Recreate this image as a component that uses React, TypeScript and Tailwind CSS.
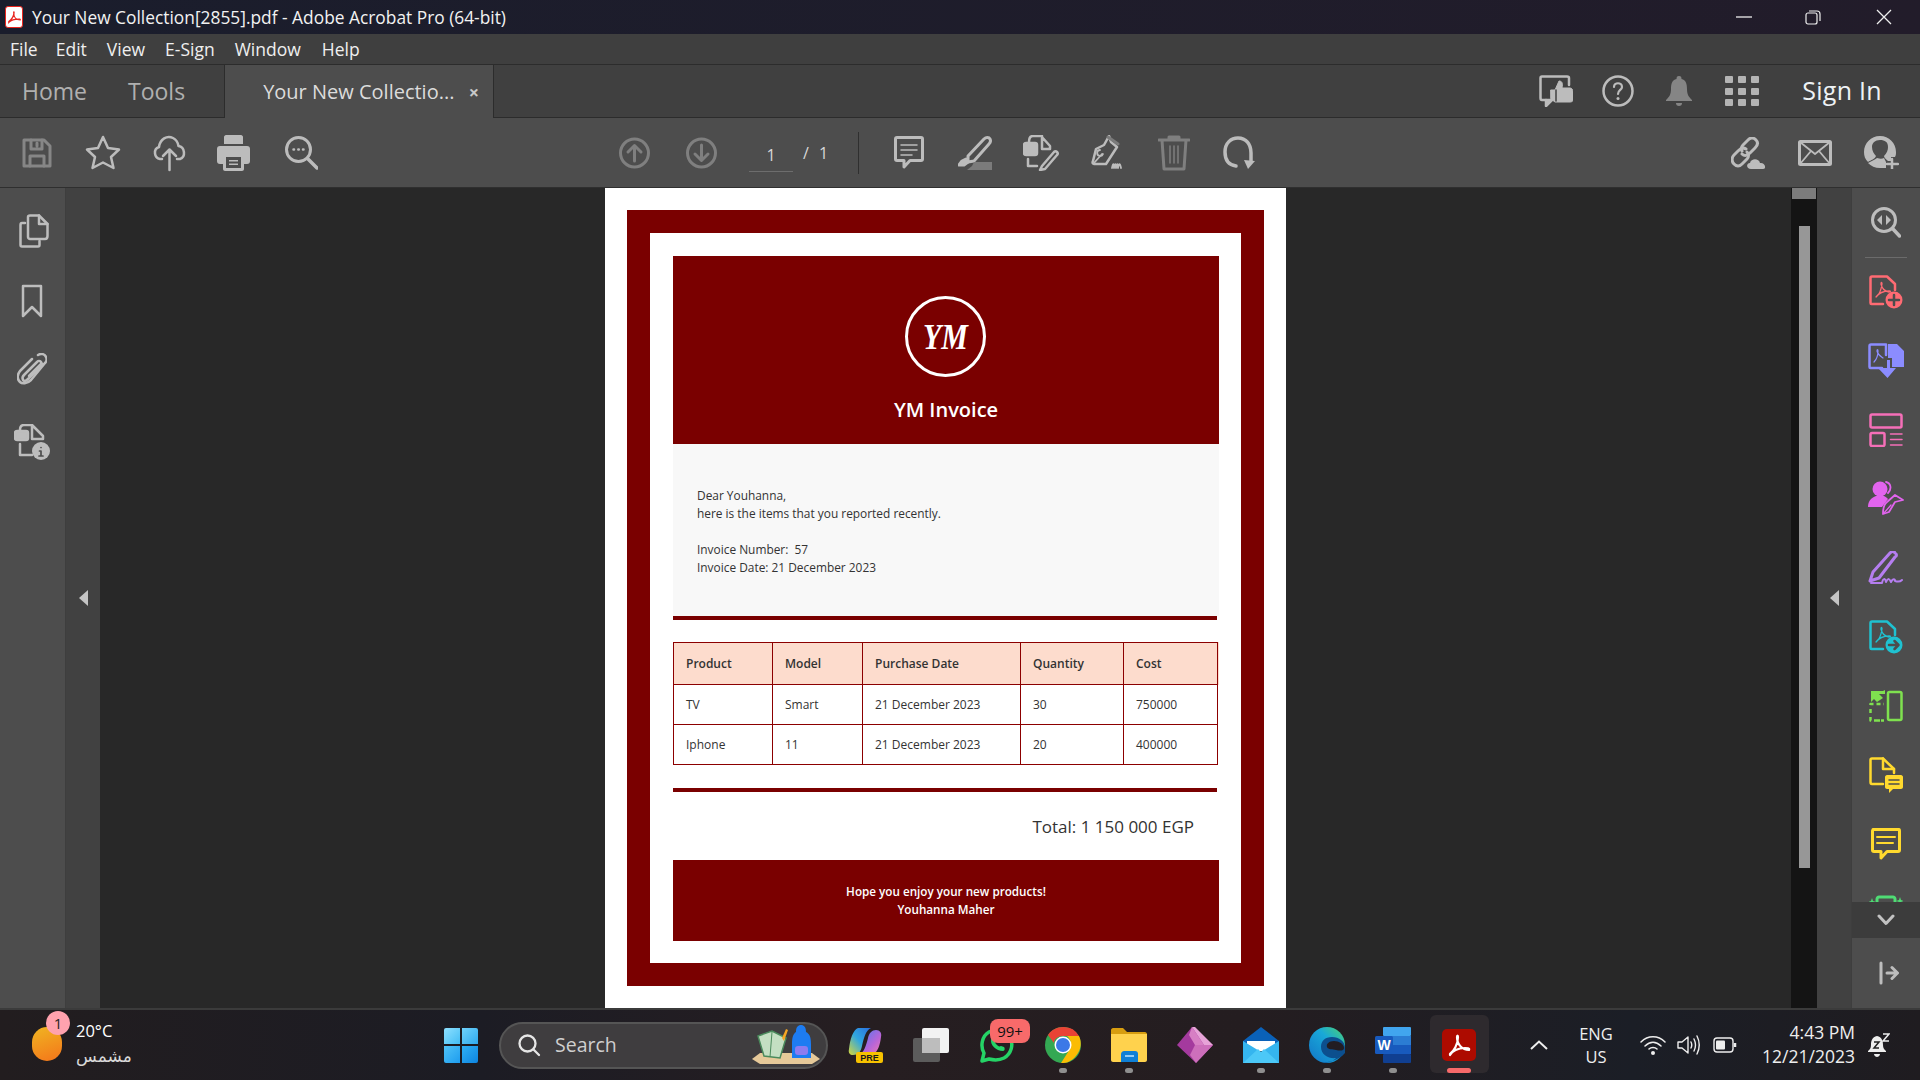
import React from "react";

const ui = "font-['Open_Sans','Noto_Sans',sans-serif]";

interface SvgProps {
  w: number;
  h: number;
  className?: string;
  sw?: number;
  children: React.ReactNode;
}

// every icon is drawn on a pixel grid the size it shows at
const Svg: React.FC<SvgProps> = ({ w, h, className, sw = 2.5, children }) => (
  <svg
    viewBox={`0 0 ${w} ${h}`}
    width={w}
    height={h}
    fill="none"
    stroke="currentColor"
    strokeWidth={sw}
    strokeLinecap="round"
    strokeLinejoin="round"
    className={`shrink-0 ${className ?? ""}`}
  >
    {children}
  </svg>
);

const PdfMark = ({ x, y, c }: { x: number; y: number; c: string }) => (
  <path
    d={`M${x} ${y + 13}c3-2 5-6 6-13c0-2-1-2-1 0c1 5 3 7 8 8c2 0 2-1 0-1c-5 0-10 2-13 6`}
    stroke={c}
    strokeWidth="1.3"
  />
);

const MainToolbar = () => (
  <div className="h-[70px] shrink-0 flex items-center bg-[#4d4d4d] border-b border-[#2f2f2f] text-[#bcbcbc]">
    <Svg w={30} h={30} className="ml-[22px] text-[#868686]" sw={3}>
      <path d="M2 2H22L28 8V28H2Z" />
      <path d="M9 2V11H20V2M15 5V8M8 28V18H22V28" />
    </Svg>
    <Svg w={36} h={35} className="ml-[33px]">
      <path d="M18 2L23 13L34 14.500L26 22L28.500 33L18 27.500L7.500 33L10 22L2 14.500L13 13Z" />
    </Svg>
    <Svg w={33} h={38} className="ml-[32px]">
      <path d="M9 25H7C1 24 0 15 6 13C7 5 14 1 20 4C24 6 25 9 25.500 12C32 13 33 23 27 25H24" />
      <path d="M16.500 36V16M10 22L16.500 15.500L23 22" />
    </Svg>
    <Svg w={33} h={36} className="ml-[31px]" sw={0}>
      <path fill="currentColor" d="M7 2C7 1 8 0 9 0H24C25 0 26 1 26 2V9H7ZM3 11H30C32 11 33 12 33 14V26C33 28 32 29 30 29H27V34C27 35 26 36 25 36H8C7 36 6 35 6 34V29H3C1 29 0 28 0 26V14C0 12 1 11 3 11Z" />
      <path fill="#4d4d4d" d="M9 22H24V33H9Z" />
      <path fill="currentColor" d="M12 25H21V26.500H12ZM12 28.500H21V30H12Z" />
    </Svg>
    <Svg w={33} h={34} className="ml-[35px]" sw={3}>
      <circle cx="13.500" cy="13.500" r="12" />
      <path d="M23 23L32 32" strokeWidth="3.500" />
      <path d="M8.500 13.500h.5M13.300 13.500h.5M18 13.500h.5" strokeWidth="2.500" />
    </Svg>
    <Svg w={31} h={32} className="ml-[301px] text-[#7f7f7f]" sw={3}>
      <circle cx="15.500" cy="16" r="14" />
      <path d="M15.500 24V9M9 15L15.500 8.500L22 15" />
    </Svg>
    <Svg w={31} h={32} className="ml-[36px] text-[#7f7f7f]" sw={3}>
      <circle cx="15.500" cy="16" r="14" />
      <path d="M15.500 8V23M9 17L15.500 23.500L22 17" />
    </Svg>
    <div className={`ml-[32px] w-[44px] h-[32px] mt-[6px] flex items-center justify-center border-b border-[#6d6d6d] text-[#d8d8d8] text-[16px] ${ui}`}>1</div>
    <span className={`ml-[10px] w-[8px] text-[#d8d8d8] text-[16px] ${ui}`}>/</span>
    <span className={`ml-[8px] w-[8px] text-[#d8d8d8] text-[16px] ${ui}`}>1</span>
    <div className="ml-[31px] w-px h-[42px] bg-[#2f2f2f]" />
    <Svg w={30} h={33} className="ml-[35px]" sw={3}>
      <path d="M3 1.500H27C28 1.500 28.500 2 28.500 3V23C28.500 24 28 24.500 27 24.500H16L10 31V24.500H3C2 24.500 1.500 24 1.500 23V3C1.500 2 2 1.500 3 1.500Z" />
      <path d="M7 9H23M7 14H23M7 19H18" strokeWidth="1.500" />
    </Svg>
    <Svg w={34} h={34} className="ml-[34px]" sw={3}>
      <path d="M10 20L26 3C28 1 31 1 32 3C33 5 33 6 31 8L16 25L10 26Z" />
      <path d="M10 26L6 29H1L4 25L8 23Z" fill="currentColor" />
      <path d="M16 26H34V34H9L14 30Z" fill="#7b7b7b" stroke="none" />
    </Svg>
    <Svg w={36} h={36} className="ml-[31px]">
      <path d="M6 7C6 2 8 1 10 1H18L27 11V14H19V1" />
      <rect x="1" y="8" width="13" height="12" rx="2" fill="currentColor" />
      <path d="M5 24V31H14" />
      <path d="M19 31L31 17C33 15 36 18 34 20L22 34L17 35Z" />
    </Svg>
    <Svg w={34} h={36} className="ml-[32px]">
      <path d="M18 1L20 7L26 12L15 29H3C2 29 1 28 2 26L5 14L13 10Z" />
      <path d="M17 2L27 9" stroke="#7b7b7b" strokeWidth="3" />
      <path d="M3 28L11 19M9 15A3 3 0 1 0 12 19" strokeWidth="1.800" />
      <path d="M21 33C22 28 23 28 23 33C24 28 25 28 25 33C26 28 27 28 27 33C28 28 29 28 30 33" strokeWidth="1.800" />
    </Svg>
    <Svg w={32} h={36} className="ml-[33px] text-[#7f7f7f]" sw={3}>
      <path d="M1 5H31M11 5V2H21V5M4 5L6 34H26L28 5" />
      <path d="M12 11V28M16 11V28M20 11V28" strokeWidth="1.500" />
    </Svg>
    <Svg w={32} h={34} className="ml-[33px]" sw={3.5}>
      <path d="M13 30C6 29 2 24 2 16C2 7 8 2 15 2C23 2 28 8 28 17V25" />
      <path d="M21 24L32 25L25 33Z" fill="currentColor" stroke="none" />
    </Svg>
    <Svg w={36} h={32} className="ml-auto">
      <path d="M15 12C12 10 9 12 7 14L3 18C0 21 1 25 3 27C6 30 9 29 11 27L16 22C18 20 18 17 16 15" strokeWidth="3" />
      <path d="M11 17C14 20 17 18 19 16L24 11C27 8 27 5 25 3C22 0 19 1 17 3L12 8C10 10 10 12 11 14" strokeWidth="3" />
      <path d="M20 32C15 32 15 26 19 26C20 21 28 21 29 26C34 25 36 32 32 32Z" fill="currentColor" stroke="none" />
    </Svg>
    <Svg w={34} h={26} className="ml-[31px]" sw={3}>
      <rect x="1.500" y="1.500" width="31" height="23" rx="1" />
      <path d="M2 2L17 14L32 2M2 24L13 11M32 24L21 11" strokeWidth="1.800" />
    </Svg>
    <Svg w={35} h={33} className="ml-[32px] mr-[21px]" sw={0}>
      <path fill="currentColor" d="M16 0C25 0 32 7 32 16C32 18 32 19 31 21H27V25H24C22 23 20 22 20 20C23 17 24 14 24 11C24 6 21 4 16 4C11 4 8 7 8 11C8 15 10 18 12 20C11 23 7 24 4 26C1 23 0 20 0 16C0 7 7 0 16 0ZM4 27C7 25 11 24 13 22C16 23 18 23 20 22L22 26V32C20 32 18 32 16 32C11 32 7 30 4 27Z" />
      <path stroke="currentColor" strokeWidth="2.500" d="M28 23V33M23 28H34" />
    </Svg>
  </div>
);

const TopBars = () => (
  <>
    <div className={`h-[34px] shrink-0 flex items-center bg-[linear-gradient(90deg,#1a1d2c,#221c2a)] text-[#f2f2f2] ${ui}`}>
      <div className="ml-[5px] w-[18px] h-[22px] rounded-[3px] bg-white border border-[#e8251f] flex items-center justify-center">
        <svg viewBox="0 0 16 16" width="13" height="13" fill="none" stroke="#e8251f" strokeWidth="1.600">
          <path d="M1 13C4 11 7 6 7.500 2C7.500 1 7 1 7 2C7 7 10 11 15 11C15.500 10 14 10 13 10C8 10 3 12 1 14Z" />
        </svg>
      </div>
      <span className="ml-[9px] mt-[1px] text-[17.350px]">Your New Collection[2855].pdf - Adobe Acrobat Pro (64-bit)</span>
      <svg viewBox="0 0 16 2" width="16" height="2" className="ml-auto"><path d="M0 1H16" stroke="#eee" strokeWidth="1.300" /></svg>
      <svg viewBox="0 0 16 16" width="16" height="16" fill="none" stroke="#eee" strokeWidth="1.200" className="ml-[53px]">
        <rect x="1" y="4" width="11" height="11" rx="2" />
        <path d="M4 2H12C14 2 15 3 15 5V12" />
      </svg>
      <svg viewBox="0 0 16 16" width="16" height="16" fill="none" stroke="#eee" strokeWidth="1.300" className="ml-[55px] mr-[28px]">
        <path d="M1 1L15 15M15 1L1 15" />
      </svg>
    </div>
    <div className={`h-[31px] shrink-0 flex items-center bg-[#3f3f3f] border-b border-[#2c2c2c] text-[#efefef] text-[17.500px] ${ui}`}>
      <span className="ml-[10px]">File</span>
      <span className="ml-[18px]">Edit</span>
      <span className="ml-[20px]">View</span>
      <span className="ml-[20px]">E-Sign</span>
      <span className="ml-[20px]">Window</span>
      <span className="ml-[21px]">Help</span>
    </div>
    <div className={`h-[53px] shrink-0 flex bg-[#404040] border-b border-[#2c2c2c] ${ui}`}>
      <span className="ml-[22px] self-center text-[23px] text-[#b0b0b0]">Home</span>
      <span className="ml-[41px] self-center text-[23px] text-[#b0b0b0]">Tools</span>
      <div className="ml-[39px] w-[270px] h-[53px] flex items-center bg-[#4d4d4d] border-x border-[#2c2c2c]">
        <span className="ml-[38px] text-[20px] text-[#dcdcdc] whitespace-nowrap">Your New Collectio...</span>
        <span className="ml-auto mr-[14px] text-[18px] font-bold leading-none text-[#c8c8c8]">×</span>
      </div>
      <Svg w={34} h={32} className="ml-auto self-center">
        <path d="M12 25H3C2 25 1.500 24 1.500 23V3C1.500 2 2 1.500 3 1.500H28C29 1.500 30 2 30 3V10" />
        <path d="M7 25V31L13 25" fill="currentColor" stroke="#bcbcbc" />
        <path d="M12 15H16L20 6C23 6 24 8 23 13H31C33 13 34 15 34 17V25C34 26 33 27 31 27H16L12 24Z" stroke="#bcbcbc" fill="#bcbcbc" strokeWidth="1" />
        <path d="M17 15V26" stroke="#404040" strokeWidth="1.500" />
      </Svg>
      <Svg w={32} h={32} className="ml-[29px] self-center text-[#bcbcbc]">
        <circle cx="16" cy="16" r="14.500" />
        <path d="M12 12C12 7 20 7 20 12C20 15 16 15 16 19" strokeWidth="2.200" />
        <path d="M16 23.500h.01" strokeWidth="3" />
      </Svg>
      <Svg w={26} h={30} className="ml-[32px] self-center text-[#858585]" sw={0}>
        <path fill="currentColor" d="M13 0C15 0 15.500 1 15.500 3C20 4 21 8 21 13C21 19 23 21 26 24V25H0V24C3 21 5 19 5 13C5 8 6 4 10.500 3C10.500 1 11 0 13 0Z" />
        <path fill="currentColor" d="M10 27H16C16 29 15 30 13 30C11 30 10 29 10 27Z" />
      </Svg>
      <div className="ml-[33px] self-center grid grid-cols-3 gap-x-[5px] gap-y-[4.500px]">
        {[0, 1, 2, 3, 4, 5, 6, 7, 8].map((i) => (
          <div key={i} className="w-[8px] h-[7px] rounded-[1px] bg-[#b4b4b4]" />
        ))}
      </div>
      <span className="ml-[43px] mr-[38px] self-center text-[25px] text-[#eef2f5] tracking-[0.3px]">Sign In</span>
    </div>
  </>
);

const LeftRail = () => (
  <div className="w-[66px] shrink-0 flex flex-col items-center bg-[#4d4d4d] border-r border-[#3e3e3e] text-[#bdbdbd]">
    <Svg w={30} h={34} className="mt-[26px] ml-[2px]">
      <path d="M9 3C9 2 10 1.500 11 1.500H20L28.500 10V22C28.500 24 28 25 26 25H11C10 25 9 24 9 23Z" />
      <path d="M20 1.500V10H28.500" />
      <path d="M6 9H3C2 9 1.500 10 1.500 11V31C1.500 32 2 32.500 3 32.500H19C20 32.500 20.500 32 20.500 31V27" />
    </Svg>
    <Svg w={22} h={34} className="mt-[36px] -ml-[2px]">
      <path d="M2 2H20V32L11 23L2 32Z" />
    </Svg>
    <Svg w={30} h={32} className="mt-[35px] -ml-[2px]">
      <path d="M27 10L12 25C9 28 8 27 7 26C6 24 6 23 8 21L21 8C23 6 24 7 25 8C26 9 25 10 24 11L13 22" transform="translate(-1 1)" />
      <path d="M21 2C24 0 28 1 29 4C30 6 30 8 28 10L14 27C10 31 5 31 3 29C0 26 0 22 3 18L15 6" />
    </Svg>
    <Svg w={36} h={36} className="mt-[39px] -ml-[1px]" sw={2.500}>
      <path d="M6 6C6 2 8 1 10 1H18L29 12V15H18V1" />
      <rect x="1" y="7" width="13" height="9" rx="2" fill="currentColor" />
      <path d="M6 20V31H18" />
      <circle cx="27" cy="27" r="9" fill="currentColor" stroke="none" />
      <path d="M27 23.500h.01M25.500 27H27V32M25 32H29" stroke="#4d4d4d" strokeWidth="1.700" />
    </Svg>
  </div>
);

const Cell = ({ children, head }: { children: React.ReactNode; head?: boolean }) => (
  <td className={`border border-[#8c0000] pl-[12px] text-[12px] text-[#333] ${head ? "font-semibold" : ""}`}>{children}</td>
);

const Invoice = () => (
  <div className="w-[681px] h-full bg-white pl-[22px] pr-[22px] pt-[22px] pb-[22px] font-['Open_Sans','Noto_Sans',sans-serif]">
    <div className="h-full bg-[#7a0000] p-[23px]">
      <div className="h-full bg-white pl-[23px] pr-[22px] py-[23px] flex flex-col">
        <div className="h-[188px] shrink-0 bg-[#7a0000] flex flex-col items-center pt-[40px] text-white">
          <div className="w-[81px] h-[81px] mr-[1px] rounded-full border-[3px] border-white flex items-center justify-center">
            <span className="font-['Liberation_Serif',serif] italic font-bold text-[30px] leading-none scale-y-[1.2]">YM</span>
          </div>
          <div className="mt-[19px] text-[20px] font-semibold leading-[28px]">YM Invoice</div>
        </div>
        <div className="h-[172px] shrink-0 bg-[#f8f8f8] pt-[42px] pl-[24px] text-[11.900px] leading-[18px] text-[#333]">
          <div>Dear Youhanna,</div>
          <div>here is the items that you reported recently.</div>
          <div className="mt-[18px]">Invoice Number:&nbsp; 57</div>
          <div>Invoice Date: 21 December 2023</div>
        </div>
        <div className="h-[4px] w-[544px] shrink-0 bg-[#7a0000]" />
        <div className="mt-[22px] flex items-start">
          <table className="w-[544px] h-[123px] table-fixed border-collapse">
            <colgroup>
              <col className="w-[99px]" />
              <col className="w-[90px]" />
              <col className="w-[158px]" />
              <col className="w-[103px]" />
              <col className="w-[94px]" />
            </colgroup>
            <tbody>
              <tr className="h-[42px] bg-[#fddccd]">
                <Cell head>Product</Cell>
                <Cell head>Model</Cell>
                <Cell head>Purchase Date</Cell>
                <Cell head>Quantity</Cell>
                <Cell head>Cost</Cell>
              </tr>
              <tr className="h-[40px]">
                <Cell>TV</Cell>
                <Cell>Smart</Cell>
                <Cell>21 December 2023</Cell>
                <Cell>30</Cell>
                <Cell>750000</Cell>
              </tr>
              <tr className="h-[40px]">
                <Cell>Iphone</Cell>
                <Cell>11</Cell>
                <Cell>21 December 2023</Cell>
                <Cell>20</Cell>
                <Cell>400000</Cell>
              </tr>
            </tbody>
          </table>
          <div className="w-[2px] h-[43px] bg-[#fddccd]" />
        </div>
        <div className="mt-[23px] h-[4px] w-[544px] shrink-0 bg-[#7a0000]" />
        <div className="h-[68px] shrink-0 flex items-center justify-end pt-[1px] pr-[25px] text-[17px] text-[#333]">Total: 1 150 000 EGP</div>
        <div className="h-[81px] shrink-0 bg-[#7a0000] flex flex-col items-center justify-center pb-[2px] text-[11.700px] leading-[18px] font-semibold text-white">
          <div>Hope you enjoy your new products!</div>
          <div>Youhanna Maher</div>
        </div>
      </div>
    </div>
  </div>
);

const PdfDoc = ({ c, children }: { c: string; children: React.ReactNode }) => (
  <svg viewBox="0 0 34 34" width="34" height="34" fill="none" stroke={c} strokeWidth="2.500" strokeLinejoin="round" strokeLinecap="round" className="shrink-0">
    <path d="M14 29H2.500C1.800 29 1.500 28.500 1.500 28V3C1.500 2 2 1.500 3 1.500H18L26 9V15" />
    <PdfMark x={7} y={9} c={c} />
    {children}
  </svg>
);

const Slot = ({ children }: { children: React.ReactNode }) => (
  <div className="h-[69px] w-full shrink-0 flex items-center justify-center">{children}</div>
);

const RightRail = () => (
  <div className="w-[69px] shrink-0 flex flex-col bg-[#4d4d4d] border-l border-[#3e3e3e]">
    <div className="flex-1 min-h-0 overflow-hidden flex flex-col items-center">
      <Slot>
        <Svg w={30} h={31} className="text-[#bdbdbd]" sw={3}>
          <circle cx="13" cy="13" r="11.500" />
          <path d="M21.500 21.500L28.500 29" strokeWidth="3.500" />
          <path d="M11 8V18L6 13ZM15 8V18L20 13Z" fill="currentColor" stroke="none" />
        </Svg>
      </Slot>
      <div className="w-[42px] h-px shrink-0 -mb-px bg-[#6b6b6b]" />
      <Slot>
        <PdfDoc c="#ff6b73">
          <circle cx="25" cy="25" r="8.500" fill="#ff6b73" stroke="none" />
          <path d="M25 20V30M20 25H30" stroke="#4d4d4d" strokeWidth="2.500" />
        </PdfDoc>
      </Slot>
      <Slot>
        <Svg w={36} h={36} className="text-[#8b8cff]">
          <path d="M14 25H2.500C1.800 25 1.500 24.500 1.500 24V3C1.500 2 2 1.500 3 1.500H18V12" />
          <path d="M20 1H29L36 8V24H24V15H20Z" fill="currentColor" stroke="none" />
          <path d="M19 17H22V25H28L19.500 35L10 25H19Z" fill="currentColor" stroke="none" />
          <path d="M6 19C9 16 10 13 10 8C10 6 9 6 9 8C10 12 12 13 15 15" strokeWidth="1.200" />
        </Svg>
      </Slot>
      <Slot>
        <Svg w={34} h={34} className="text-[#f56fb8]">
          <rect x="1.500" y="1.500" width="31" height="13" rx="1.500" />
          <rect x="1.500" y="20" width="14" height="13" rx="1.500" />
          <path d="M21.500 21H33M21.500 26.500H33M21.500 32H33" strokeWidth="1.500" />
        </Svg>
      </Slot>
      <Slot>
        <Svg w={36} h={35} className="text-[#e264ee]">
          <circle cx="12" cy="8" r="7.500" fill="currentColor" stroke="none" />
          <path d="M0 26C0 20 3 17 8 15H16C18 16 19 17 20 18L14 26Z" fill="currentColor" stroke="none" />
          <path d="M18 1C23 2 24 8 20 12" strokeWidth="1.800" />
          <path d="M27 14L35 19L27 21L21 31L15 33C15 29 15 24 19 21Z" strokeWidth="1.800" />
          <path d="M16 32L23 24" strokeWidth="1.300" />
        </Svg>
      </Slot>
      <Slot>
        <Svg w={36} h={34} className="text-[#b57ef0]" sw={3}>
          <path d="M2 30L5 21L22 2C24 0 26 0 27 2C29 3 29 5 27 6L11 27Z" />
          <path d="M3 32H14C15 27 17 27 18 31C20 27 21 27 23 31C25 27 27 28 27 30C30 31 32 31 34 29" strokeWidth="2" />
        </Svg>
      </Slot>
      <Slot>
        <PdfDoc c="#1fc2d1">
          <circle cx="25" cy="25" r="8.500" fill="#1fc2d1" stroke="none" />
          <path d="M20 25H29M25.500 21L29.500 25L25.500 29" stroke="#4d4d4d" strokeWidth="2.500" />
        </PdfDoc>
      </Slot>
      <Slot>
        <Svg w={34} h={32} className="text-[#7fe14f]">
          <rect x="19" y="2" width="13.500" height="28" rx="1.500" />
          <path d="M1.500 15V14H15M1.500 19V23M1.500 27V30.500H15M7 30.500H12" strokeDasharray="4 3" strokeLinecap="butt" />
          <path d="M16 0V4L10 4L14 8L8 12L5 9L2 12V1H14Z" fill="currentColor" stroke="none" />
        </Svg>
      </Slot>
      <Slot>
        <Svg w={34} h={36} className="text-[#ffd92e]">
          <path d="M14 27H3C2 27 1.500 26.500 1.500 25V3C1.500 2 2 1.500 3 1.500H14L25 12V16" />
          <path d="M14 1.500V12H25" />
          <path d="M18 18H32C33 18 34 19 34 20V30C34 31 33 32 32 32H24L20 36V32H18C17 32 16 31 16 30V20C16 19 17 18 18 18Z" fill="currentColor" stroke="none" />
          <path d="M20 23H30M20 27H30" stroke="#4d4d4d" strokeWidth="1.500" />
        </Svg>
      </Slot>
      <Slot>
        <Svg w={30} h={32} className="text-[#ffd92e]" sw={3}>
          <path d="M2 1.500H28C28.500 1.500 28.500 2 28.500 3V22C28.500 23 28 23.500 27 23.500H16L10 30V23.500H3C2 23.500 1.500 23 1.500 22V3Z" />
          <path d="M6 9H24M6 15H22" strokeWidth="2" />
        </Svg>
      </Slot>
      <Svg w={34} h={32} className="mt-[17px] text-[#4fdc74]" sw={3}>
        <path d="M8 8V4C8 3 9 2 10 2H24C25 2 26 3 26 4V20H8Z" />
        <path d="M2 6L3 3L4 6L7 7L4 8L3 11L2 8L-1 7Z" fill="currentColor" stroke="none" />
        <path d="M30 5L31 2L32 5L35 6L32 7L31 10L30 7L27 6Z" fill="currentColor" stroke="none" />
      </Svg>
    </div>
    <div className="shrink-0 w-full h-[36px] flex items-center justify-center bg-[#3c3c3c]">
      <Svg w={18} h={12} className="text-[#c2c2c2]" sw={3}>
        <path d="M2 2L9 9.500L16 2" />
      </Svg>
    </div>
    <div className="shrink-0 h-[70px] flex items-center justify-center pl-[6px]">
      <Svg w={20} h={24} className="text-[#bdbdbd]" sw={3}>
        <path d="M2 2V22M8 12H18M13 6.500L18.500 12L13 17.500" />
      </Svg>
    </div>
  </div>
);

const Main = () => (
  <div className="flex-1 min-h-0 flex">
    <LeftRail />
    <div className="w-[34px] shrink-0 flex items-center justify-center bg-[#414141]">
      <div className="w-0 h-0 border-y-[8px] border-y-transparent border-r-[9px] border-r-[#c4c4c4]" />
    </div>
    <div className="flex-1 min-w-0 flex pl-[505px] bg-[#282828]">
      <Invoice />
    </div>
    <div className="w-[26px] shrink-0 flex flex-col items-center bg-[#141414]">
      <div className="w-[24px] h-[11px] bg-[#7c7c7c]" />
      <div className="mt-[27px] w-[11px] h-[642px] bg-[#979797]" />
    </div>
    <div className="w-[34px] shrink-0 flex items-center justify-center bg-[#414141]">
      <div className="w-0 h-0 border-y-[8px] border-y-transparent border-r-[9px] border-r-[#c4c4c4]" />
    </div>
    <RightRail />
  </div>
);

const TaskSlot = ({ children, dot, active }: { children: React.ReactNode; dot?: boolean; active?: boolean }) => (
  <div className="relative w-[66px] h-full flex items-center justify-center shrink-0">
    {active && <div className="absolute left-[4px] right-[3px] top-[5px] bottom-[7px] rounded-[6px] bg-[#2e2a2e]" />}
    <div className="relative">{children}</div>
    {dot && <div className="absolute left-[29px] bottom-[7px] w-[8px] h-[5px] rounded-full bg-[#8f8f8f]" />}
    {active && <div className="absolute left-[21px] bottom-[7px] w-[24px] h-[5px] rounded-full bg-[#f76a6a]" />}
  </div>
);

const Taskbar = () => (
  <div className={`h-[72px] shrink-0 flex items-center border-t-2 border-[#3b3b3b] bg-[linear-gradient(90deg,#221d1f,#1c1c24_25%,#261e21_45%,#241d20_65%,#1b1e26_85%,#1f1c20)] text-white ${ui}`}>
    <div className="relative ml-[32px] w-[30px] h-[34px] mt-[-2px] rounded-full bg-[linear-gradient(160deg,#f0b522,#f4751a)]">
      <div className="absolute left-[14px] top-[-16px] w-[24px] h-[24px] rounded-full bg-[#ffa2ae] flex items-center justify-center text-[15px] text-[#222]">1</div>
    </div>
    <div className="ml-[14px] w-[100px] flex flex-col leading-none">
      <span className="text-[16.500px] mt-[-2px]">20°C</span>
      <span className="mt-[8px] text-[17px] text-[#d8d8d8] font-['DejaVu_Sans',sans-serif]">مشمس</span>
    </div>
    <div className="ml-[268px] w-[34px] h-[35px] grid grid-cols-2 gap-[1.500px] shrink-0">
      <div className="rounded-tl-[2px] bg-[linear-gradient(135deg,#8ee0ff,#43bdf5)]" />
      <div className="rounded-tr-[2px] bg-[linear-gradient(135deg,#6fd2fb,#2fa9ee)]" />
      <div className="rounded-bl-[2px] bg-[linear-gradient(135deg,#4fc3f7,#1d9cef)]" />
      <div className="rounded-br-[2px] bg-[linear-gradient(135deg,#2fb0f5,#0d84e0)]" />
    </div>
    <div className="ml-[21px] w-[329px] h-[47px] shrink-0 rounded-full bg-[#3f3d3f] border-2 border-[#555] flex items-center">
      <svg viewBox="0 0 24 24" width="24" height="24" fill="none" stroke="#e6e6e6" strokeWidth="2.300" strokeLinecap="round" className="ml-[16px]">
        <circle cx="10.500" cy="10.500" r="8" />
        <path d="M16.500 16.500L22 22" />
      </svg>
      <span className="ml-[14px] text-[19.500px] text-[#cfcfcf]">Search</span>
      <svg viewBox="0 0 68 42" width="68" height="42" className="ml-auto mr-[6px]">
        <path d="M0 35L8 29H60L68 35L60 40H8Z" fill="#e6c999" />
        <path d="M6 12L20 7L34 14L28 34L12 32Z" fill="#c4dfc2" stroke="#4b8a5c" strokeWidth="1.500" />
        <path d="M20 8L18 33" stroke="#4b8a5c" />
        <path d="M30 14L34 5L36 6L32 17Z" fill="#f5a623" />
        <path d="M44 8C44 3 46 1 49 1C52 1 54 3 54 8C58 10 59 14 59 20V34H40V20C40 14 41 10 44 8Z" fill="#1d7cf2" />
        <rect x="43" y="22" width="13" height="9" rx="3" fill="#8b7cf0" />
      </svg>
    </div>
    <div className="ml-[4px] h-full flex">
      <TaskSlot>
        <svg viewBox="0 0 36 36" width="36" height="36">
          <defs>
            <linearGradient id="cpa" x1="0" y1="1" x2="1" y2="0">
              <stop offset="0" stopColor="#d8d83a" />
              <stop offset="0.5" stopColor="#2fa6e0" />
              <stop offset="1" stopColor="#2b6fe0" />
            </linearGradient>
            <linearGradient id="cpb" x1="0" y1="0" x2="1" y2="1">
              <stop offset="0" stopColor="#4b7bf0" />
              <stop offset="0.6" stopColor="#b765d8" />
              <stop offset="1" stopColor="#f07ab0" />
            </linearGradient>
          </defs>
          <path d="M2 22C3 12 6 3 11 1H24C19 3 17 10 15 19C14 24 12 28 6 28C3 28 1 26 2 22Z" fill="url(#cpa)" />
          <path d="M34 10C33 18 31 25 26 27H13C17 25 19 19 21 11C22 6 25 3 29 3C33 3 35 6 34 10Z" fill="url(#cpb)" />
          <rect x="9" y="25" width="27" height="11" rx="2" fill="#f7c200" />
          <text x="22.500" y="34" textAnchor="middle" fontSize="9" fontWeight="700" fill="#1a1a1a" fontFamily="'Liberation Sans',sans-serif">PRE</text>
        </svg>
      </TaskSlot>
      <TaskSlot>
        <svg viewBox="0 0 37 34" width="37" height="34">
          <rect x="0" y="10" width="27" height="24" rx="2" fill="#5c5c5c" />
          <rect x="9" y="0" width="27" height="25" rx="2" fill="#f2f2f2" />
          <rect x="9" y="10" width="18" height="15" fill="#bdbdbd" />
        </svg>
      </TaskSlot>
      <TaskSlot>
        <div className="relative w-[36px] h-[36px]">
          <svg viewBox="0 0 36 36" width="36" height="36" fill="none" stroke="#25d366" strokeWidth="3.500">
            <path d="M3 34L5 26C1 19 3 9 10 5C17 1 27 3 31 10C35 18 32 27 25 31C19 34 14 33 10 32Z" strokeLinejoin="round" />
            <path d="M12 12C11 18 17 24 24 24C26 24 26 21 25 20L22 19C20 20 19 19 17 17C16 16 16 15 16 14L15 11C14 10 12 11 12 12Z" fill="#25d366" stroke="none" />
          </svg>
          <div className="absolute left-[11px] top-[-8px] w-[40px] h-[24px] rounded-[8px] bg-[#f86a6a] flex items-center justify-center text-[15px] text-[#111]">99+</div>
        </div>
      </TaskSlot>
      <TaskSlot dot>
        <svg viewBox="0 0 36 36" width="36" height="36">
          <circle cx="18" cy="18" r="18" fill="#34a853" />
          <path d="M18 0A18 18 0 0 1 34 9H18C13 9 9 12 9 16L3 8C6 3 12 0 18 0Z" fill="#ea4335" />
          <path d="M34 9C38 17 35 28 25 34C22 36 19 36 16 36L25 22C27 18 26 12 22 9Z" fill="#fbbc04" />
          <circle cx="18" cy="18" r="8.500" fill="#fff" />
          <circle cx="18" cy="18" r="7" fill="#3b78e7" />
        </svg>
      </TaskSlot>
      <TaskSlot dot>
        <svg viewBox="0 0 36 34" width="36" height="34">
          <path d="M0 2C0 1 1 0 2 0H12L16 4H34C35 4 36 5 36 6V12H0Z" fill="#d79d10" />
          <path d="M0 6H36V32C36 33 35 34 34 34H2C1 34 0 33 0 32Z" fill="#ffd24d" />
          <path d="M10 34V26C10 24 12 23 13 23H24C26 23 27 24 27 26V34Z" fill="#0f7fd6" />
          <path d="M14 28H23" stroke="#bfe3ff" strokeWidth="1.500" />
        </svg>
      </TaskSlot>
      <TaskSlot>
        <svg viewBox="0 0 36 36" width="36" height="36">
          <path d="M15 0L36 18L19 36L0 18Z" fill="#a43a9e" />
          <path d="M15 0H18L36 18L27 18Z" fill="#e7a3d8" />
          <path d="M15 0L27 18L18 18L12 8Z" fill="#d77fc4" />
          <path d="M18 18H36L19 36L13 28Z" fill="#cd6fbb" />
        </svg>
      </TaskSlot>
      <TaskSlot dot>
        <svg viewBox="0 0 36 36" width="36" height="36">
          <path d="M0 14L18 0L36 14V18H0Z" fill="#0a61b8" />
          <path d="M4 14H32V24H4Z" fill="#fff" />
          <path d="M0 14L18 25L36 14V36H0Z" fill="#35b5ef" />
          <path d="M0 36L15 22L18 25L21 22L36 36Z" fill="#4cc8f7" />
        </svg>
      </TaskSlot>
      <TaskSlot dot>
        <svg viewBox="0 0 36 36" width="36" height="36">
          <defs>
            <linearGradient id="edg" x1="0" y1="1" x2="1" y2="0">
              <stop offset="0" stopColor="#1274c7" />
              <stop offset="0.6" stopColor="#19a8d8" />
              <stop offset="1" stopColor="#4dd46c" />
            </linearGradient>
          </defs>
          <circle cx="18" cy="18" r="18" fill="url(#edg)" />
          <path d="M36 21C36 14 30 10 23 10C16 10 12 14 12 20C12 28 20 32 27 31C22 37 10 36 10 36C15 36 30 34 36 26Z" fill="#0c4f8e" />
          <path d="M35 21C35 17 30 14 25 14C20 14 17 17 18 20C19 23 24 22 27 23C31 24 35 24 35 21Z" fill="#221d22" />
        </svg>
      </TaskSlot>
      <TaskSlot dot>
        <svg viewBox="0 0 36 36" width="36" height="36">
          <rect x="8" y="0" width="28" height="9" rx="1" fill="#41a5ee" />
          <rect x="8" y="9" width="28" height="9" fill="#2b7cd3" />
          <rect x="8" y="18" width="28" height="9" fill="#185abd" />
          <rect x="8" y="27" width="28" height="9" rx="1" fill="#103f91" />
          <rect x="0" y="9" width="18" height="18" rx="1.500" fill="#185abd" />
          <text x="9" y="23" textAnchor="middle" fontSize="14" fontWeight="700" fill="#fff" fontFamily="'Liberation Sans',sans-serif">W</text>
        </svg>
      </TaskSlot>
      <TaskSlot active>
        <div className="w-[34px] h-[32px] rounded-[5px] bg-[#ad0b00] flex items-center justify-center">
          <svg viewBox="0 0 24 24" width="24" height="24" fill="none" stroke="#fff" strokeWidth="2.200" strokeLinejoin="round">
            <path d="M3 21C7 18 11 11 11 4C11 2 10 2 10 4C10 11 15 17 22 17C23 15 20 15 18 15C11 15 5 18 3 22Z" />
          </svg>
        </div>
      </TaskSlot>
    </div>
    <svg viewBox="0 0 18 10" width="18" height="10" fill="none" stroke="#eee" strokeWidth="2" className="ml-[38px] shrink-0">
      <path d="M1 9L9 1.500L17 9" />
    </svg>
    <div className="ml-[22px] w-[52px] flex flex-col items-center text-[16.500px] leading-[23px] text-[#eee]">
      <span>ENG</span>
      <span>US</span>
    </div>
    <svg viewBox="0 0 26 20" width="26" height="20" fill="none" stroke="#eee" strokeWidth="1.500" strokeLinecap="round" className="ml-[18px] shrink-0">
      <path d="M1 7C8 0 18 0 25 7M5 11C10 6 16 6 21 11M9 14C11 12 15 12 17 14" />
      <circle cx="13" cy="18" r="2" fill="#eee" stroke="none" />
    </svg>
    <svg viewBox="0 0 24 20" width="24" height="20" fill="none" stroke="#eee" strokeWidth="1.400" strokeLinecap="round" strokeLinejoin="round" className="ml-[11px] shrink-0">
      <path d="M1 7V13H5L11 18V2L5 7Z" />
      <path d="M14 7C15 9 15 11 14 13M17 4C19 8 19 12 17 16M20 1C23 7 23 13 20 19" />
    </svg>
    <svg viewBox="0 0 24 16" width="24" height="16" fill="none" stroke="#eee" strokeWidth="1.400" className="ml-[12px] shrink-0">
      <rect x="1" y="1" width="19" height="14" rx="3" />
      <rect x="3" y="3.500" width="9" height="9" rx="1" fill="#eee" stroke="none" />
      <path d="M22 6V10" strokeWidth="2.500" />
    </svg>
    <div className="ml-[8px] w-[110px] mt-[-2px] flex flex-col items-end text-[17.500px] leading-[24px] text-[#eee]">
      <span>4:43 PM</span>
      <span>12/21/2023</span>
    </div>
    <svg viewBox="0 0 22 24" width="22" height="24" className="ml-[13px] shrink-0">
      <path d="M9 3C4 4 3 8 3 12C3 15 2 16 0 18V19H18V18C16 16 15 15 15 12C15 8 14 4 9 3Z" fill="#eee" />
      <path d="M6 21H12C12 23 10 24 9 24C8 24 6 23 6 21Z" fill="#eee" />
      <path d="M6 9H11L6 15H11" stroke="#222" strokeWidth="1.500" fill="none" />
      <path d="M15 1H21L15 8H21" stroke="#eee" strokeWidth="1.500" fill="none" />
    </svg>
  </div>
);

export default function App() {
  return (
    <div className="w-[1920px] h-[1080px] flex flex-col overflow-hidden bg-[#282828] text-[#bcbcbc]">
      <TopBars />
      <MainToolbar />
      <Main />
      <Taskbar />
    </div>
  );
}
